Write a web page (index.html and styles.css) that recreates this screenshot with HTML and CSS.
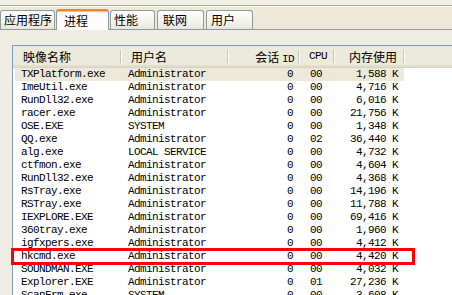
FILE: index.html
```html
<html>
<head>
    <title>Windows 任务管理器 - 进程</title>
    <link rel="stylesheet" href="styles.css">
</head>
<body>

    <div class="menubar"></div>
    <div class="tabs">
        <div class="tab tab-apps">应用程序</div>
        <div class="tab tab-proc active">进程</div>
        <div class="tab tab-perf">性能</div>
        <div class="tab tab-net">联网</div>
        <div class="tab tab-users">用户</div>
    </div>
    <div class="panel">
        <div class="list">
            <div class="list-head">
                <div class="col c-name">映像名称</div>
                <div class="col c-user">用户名</div>
                <div class="col c-sess">会话 <span class="mono">ID</span></div>
                <div class="col c-cpu"><span class="mono">CPU</span></div>
                <div class="col c-mem">内存使用</div>
            </div>
            <div id="rows" class="list-body"></div>
        </div>
    </div>

    <script>
        const procs = [
            ['TXPlatform.exe', 'Administrator', '0', '00', '1,588 K'],
            ['ImeUtil.exe', 'Administrator', '0', '00', '4,716 K'],
            ['RunDll32.exe', 'Administrator', '0', '00', '6,016 K'],
            ['racer.exe', 'Administrator', '0', '00', '21,756 K'],
            ['OSE.EXE', 'SYSTEM', '0', '00', '1,348 K'],
            ['QQ.exe', 'Administrator', '0', '02', '36,440 K'],
            ['alg.exe', 'LOCAL SERVICE', '0', '00', '4,732 K'],
            ['ctfmon.exe', 'Administrator', '0', '00', '4,604 K'],
            ['RunDll32.exe', 'Administrator', '0', '00', '4,368 K'],
            ['RsTray.exe', 'Administrator', '0', '00', '14,196 K'],
            ['RSTray.exe', 'Administrator', '0', '00', '11,788 K'],
            ['IEXPLORE.EXE', 'Administrator', '0', '00', '69,416 K'],
            ['360tray.exe', 'Administrator', '0', '00', '1,960 K'],
            ['igfxpers.exe', 'Administrator', '0', '00', '4,412 K'],
            ['hkcmd.exe', 'Administrator', '0', '00', '4,420 K'],
            ['SOUNDMAN.EXE', 'Administrator', '0', '00', '4,032 K'],
            ['Explorer.EXE', 'Administrator', '0', '01', '27,236 K'],
            ['ScanFrm.exe', 'SYSTEM', '0', '00', '3,608 K']
        ];
        const cls = ['c-name', 'c-user', 'c-sess', 'c-cpu', 'c-mem'];
        const list = document.getElementById('rows');

        procs.forEach((p, i) => {
            const row = document.createElement('div');
            row.className = 'row';
            if (i === 0) row.classList.add('selected');
            if (p[0] === 'hkcmd.exe') row.classList.add('marked');
            p.forEach((v, j) => {
                const cell = document.createElement('div');
                cell.className = 'col ' + cls[j];
                cell.textContent = v;
                row.appendChild(cell);
            });
            list.appendChild(row);
        });
    </script>

</body>
</html>
```

FILE: styles.css
```css
body { margin: 0; width: 452px; height: 295px; overflow: hidden; background-color: #ece9d8; font-family: "Noto Sans CJK SC", sans-serif; font-size: 12px; color: #000; }
.mono { font-family: "Liberation Mono", monospace; font-size: 11px; letter-spacing: -0.6px; }

.menubar { height: 5px; background-color: #f1efe6; border-bottom: 1px solid #aca899; box-shadow: 0 1px 0 #fff; }

.tabs { display: flex; align-items: flex-end; height: 23px; padding-left: 0; }
.tab { box-sizing: border-box; height: 19px; line-height: 17px; border: 1px solid #919b9c; border-bottom: none; border-radius: 3px 3px 0 0; background: linear-gradient(#fefefe, #f4f3ee 60%, #e6e5dd); margin-right: 1px; white-space: nowrap; }
.tab.active { height: 21px; line-height: 19px; background: #fcfcfe; border-top: 2px solid #e68b2c; box-shadow: inset 0 1px 0 #ffc83c; margin-bottom: -1px; position: relative; z-index: 1; }
.tab-apps { width: 55px; padding-left: 3px; }
.tab-proc { width: 53px; padding-left: 7px; }
.tab-perf { width: 45px; padding-left: 3px; }
.tab-net { width: 47px; padding-left: 5px; margin-left: 1px; }
.tab-users { width: 47px; padding-left: 4px; margin-left: 1px; }

.panel { border-top: 1px solid #919b9c; background-color: #efede3; padding: 15px 0 0 12px; height: 300px; }

.list { width: 470px; height: 300px; border: 1px solid #7f9db9; border-right: none; background-color: #fff; }

.list-head { display: flex; height: 22px; background-color: #ebeadb; box-sizing: border-box; border-bottom: 1px solid #d6d2c2; box-shadow: 0 -2px 0 #e2decd inset; }
.list-head .col { position: relative; line-height: 21px; }
.list-head .col::after { content: ""; position: absolute; right: 0; top: 4px; bottom: 4px; width: 1px; background-color: #c7c5b2; box-shadow: 1px 0 0 #fff; }
.list-head .c-name { width: 108px; padding-left: 10px; }
.list-head .c-user { width: 107px; padding-left: 10px; }
.list-head .c-sess { width: 71px; padding-right: 5px; text-align: right; }
.list-head .c-cpu { width: 35px; padding-left: 10px; }
.list-head .c-mem { width: 70px; padding-right: 7px; text-align: right; }
.list-head .col { box-sizing: border-box; }

.list-body { padding-left: 2px; }
.row { display: flex; width: 389px; height: 13px; line-height: 13px; font-family: "Liberation Mono", monospace; font-size: 11px; letter-spacing: -0.6px; white-space: pre; position: relative; }
.row .col { box-sizing: border-box; }
.row .c-name { width: 106px; padding-left: 6px; }
.row .c-user { width: 107px; padding-left: 7px; }
.row .c-sess { width: 71px; padding-right: 6px; text-align: right; }
.row .c-cpu { width: 35px; padding-left: 11px; }
.row .c-mem { width: 70px; padding-right: 6px; text-align: right; }
.row.selected { background-color: #ece9d8; }
.row.marked::after { content: ""; position: absolute; left: -4px; right: -11px; top: -2px; bottom: -2px; border: 3px solid #f00; }
```
